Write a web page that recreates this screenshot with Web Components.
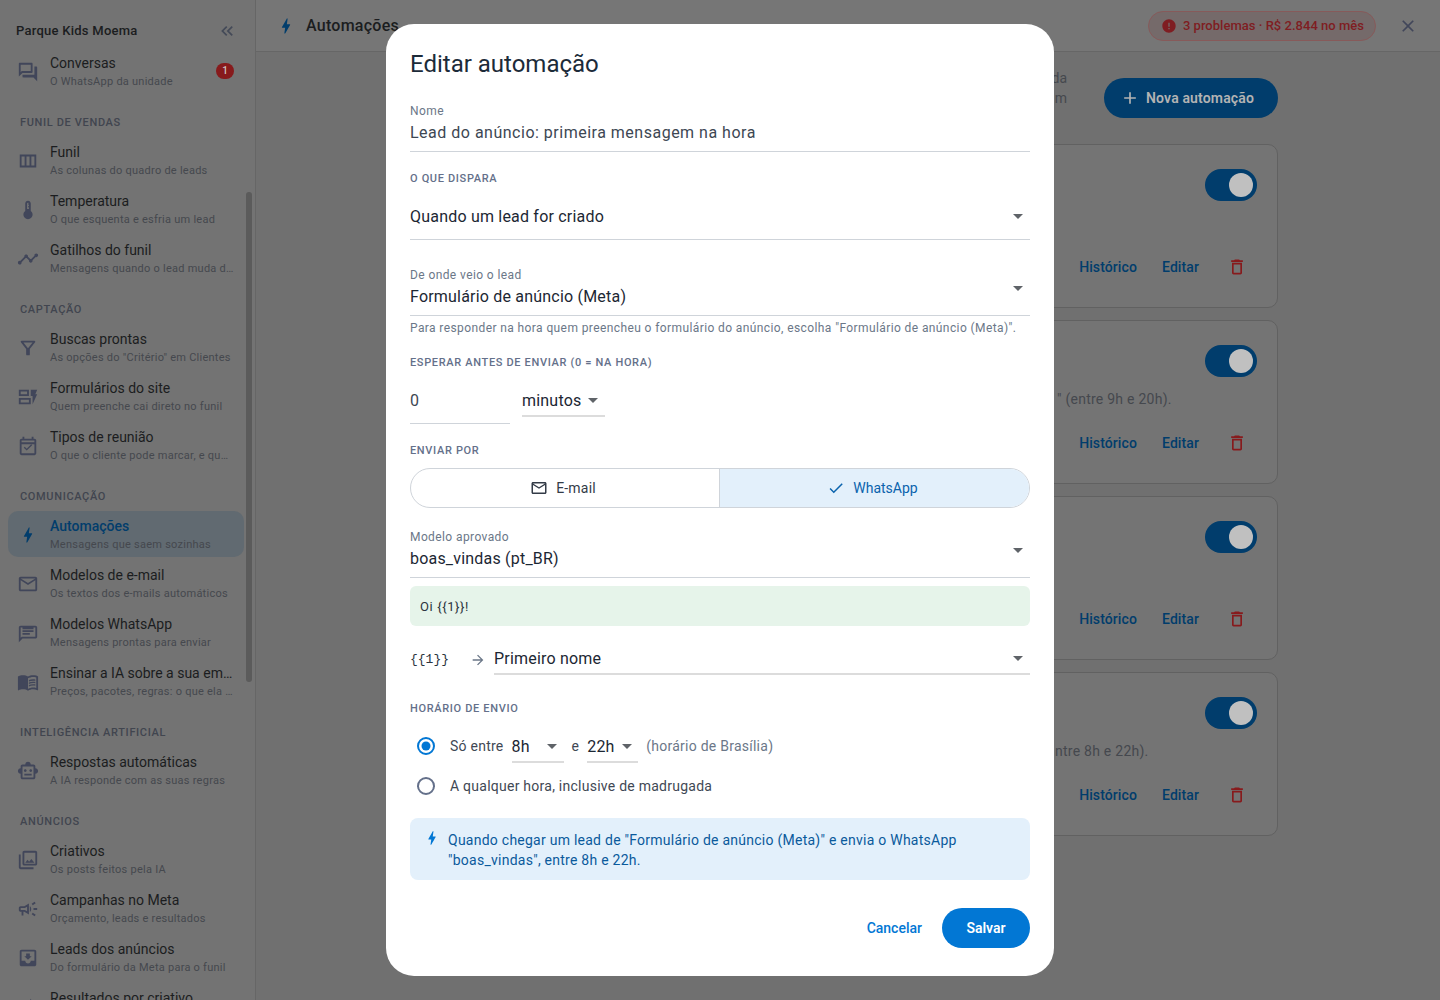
<!DOCTYPE html>
<html lang="pt-BR">
<head>
<meta charset="utf-8">
<title>Automações</title>
<style>
  html, body { margin: 0; height: 1000px; overflow: hidden; background: #707070; }
  body { font-family: Roboto, "Liberation Sans", sans-serif; }
</style>
</head>
<body>
<app-shell>
  <side-bar slot="side" unit="Parque Kids Moema">
    <nav-item icon="forum" name="Conversas" sub="O WhatsApp da unidade" badge="1"></nav-item>
    <nav-section label="FUNIL DE VENDAS"></nav-section>
    <nav-item icon="week" name="Funil" sub="As colunas do quadro de leads"></nav-item>
    <nav-item icon="thermo" name="Temperatura" sub="O que esquenta e esfria um lead"></nav-item>
    <nav-item icon="timeline" name="Gatilhos do funil" sub="Mensagens quando o lead muda d…"></nav-item>
    <nav-section label="CAPTAÇÃO"></nav-section>
    <nav-item icon="filter" name="Buscas prontas" sub='As opções do "Critério" em Clientes'></nav-item>
    <nav-item icon="dynform" name="Formulários do site" sub="Quem preenche cai direto no funil"></nav-item>
    <nav-item icon="event" name="Tipos de reunião" sub="O que o cliente pode marcar, e qu…"></nav-item>
    <nav-section label="COMUNICAÇÃO"></nav-section>
    <nav-item icon="bolt" name="Automações" sub="Mensagens que saem sozinhas" active></nav-item>
    <nav-item icon="mail" name="Modelos de e-mail" sub="Os textos dos e-mails automáticos"></nav-item>
    <nav-item icon="chat" name="Modelos WhatsApp" sub="Mensagens prontas para enviar"></nav-item>
    <nav-item icon="book" name="Ensinar a IA sobre a sua em…" sub="Preços, pacotes, regras: o que ela …"></nav-item>
    <nav-section label="INTELIGÊNCIA ARTIFICIAL"></nav-section>
    <nav-item icon="robot" name="Respostas automáticas" sub="A IA responde com as suas regras"></nav-item>
    <nav-section label="ANÚNCIOS"></nav-section>
    <nav-item icon="photos" name="Criativos" sub="Os posts feitos pela IA"></nav-item>
    <nav-item icon="campaign" name="Campanhas no Meta" sub="Orçamento, leads e resultados"></nav-item>
    <nav-item icon="inbox" name="Leads dos anúncios" sub="Do formulário da Meta para o funil"></nav-item>
    <nav-item icon="insights" name="Resultados por criativo" sub=""></nav-item>
  </side-bar>
  <top-bar slot="top" heading="Automações" alert="3 problemas · R$ 2.844 no mês"></top-bar>
  <auto-list slot="main">
    <auto-card></auto-card>
    <auto-card note='" (entre 9h e 20h).' left="638"></auto-card>
    <auto-card></auto-card>
    <auto-card note="ntre 8h e 22h)." left="636"></auto-card>
  </auto-list>
</app-shell>
<edit-dialog></edit-dialog>

<script>
const ICONS = {
  forum: "M15 4v7H5.17L4 12.17V4h11m1-2H3c-.55 0-1 .45-1 1v14l4-4h10c.55 0 1-.45 1-1V3c0-.55-.45-1-1-1zm5 4h-2v9H6v2c0 .55.45 1 1 1h11l4 4V7c0-.55-.45-1-1-1z",
  week: "M3 5v14h18V5H3zm5.33 12H5V7h3.33v10zm5.34 0h-3.33V7h3.33v10zM19 17h-3.33V7H19v10z",
  thermo: "M15 13V5c0-1.66-1.34-3-3-3S9 3.34 9 5v8c-1.21.91-2 2.37-2 4 0 2.76 2.24 5 5 5s5-2.24 5-5c0-1.63-.79-3.09-2-4zm-4-8c0-.55.45-1 1-1s1 .45 1 1h-1v1h1v2h-1v1h1v2h-2V5z",
  timeline: "M23 8c0 1.1-.9 2-2 2-.18 0-.35-.02-.51-.07l-3.56 3.55c.05.16.07.34.07.52 0 1.1-.9 2-2 2s-2-.9-2-2c0-.18.02-.36.07-.52l-2.55-2.55c-.16.05-.34.07-.52.07s-.36-.02-.52-.07l-4.55 4.56c.05.16.07.33.07.51 0 1.1-.9 2-2 2s-2-.9-2-2 .9-2 2-2c.18 0 .35.02.51.07l4.56-4.55C8.02 9.36 8 9.18 8 9c0-1.1.9-2 2-2s2 .9 2 2c0 .18-.02.36-.07.52l2.55 2.55c.16-.05.34-.07.52-.07s.36.02.52.07l3.55-3.56C19.02 8.35 19 8.18 19 8c0-1.1.9-2 2-2s2 .9 2 2z",
  insights: "M21 8c-1.45 0-2.26 1.44-1.93 2.51l-3.55 3.56c-.3-.09-.74-.09-1.04 0l-2.55-2.55C12.27 10.45 11.46 9 10 9c-1.45 0-2.27 1.44-1.93 2.52l-4.56 4.55C2.44 15.74 1 16.55 1 18c0 1.1.9 2 2 2 1.45 0 2.26-1.44 1.93-2.51l4.55-4.56c.3.09.74.09 1.04 0l2.55 2.55C12.73 16.55 13.54 18 15 18c1.45 0 2.27-1.44 1.93-2.52l3.56-3.55c1.07.33 2.51-.48 2.51-1.93 0-1.1-.9-2-2-2zM15 9l.94-2.07L18 6l-2.06-.93L15 3l-.92 2.07L12 6l2.08.93zM3.5 11 4 9l2-.5L4 8l-.5-2L3 8l-2 .5L3 9z",
  filter: "M7 6h10l-5.01 6.3L7 6zm-2.75-.39C6.27 8.2 10 13 10 13v6c0 .55.45 1 1 1h2c.55 0 1-.45 1-1v-6s3.72-4.8 5.74-7.39c.51-.66.04-1.61-.79-1.61H5.04c-.83 0-1.3.95-.79 1.61z",
  dynform: "M17 20v-9h-2V4h7l-2 5h2l-5 11zM15 13v7H2v-7h13zm-2 2H4v3h9v-3zM13 4v7H2V4h11zm-2 2H4v3h7V6z",
  event: "M19 4h-1V2h-2v2H8V2H6v2H5c-1.11 0-1.99.9-1.99 2L3 20c0 1.1.89 2 2 2h14c1.1 0 2-.9 2-2V6c0-1.1-.9-2-2-2zm0 16H5V10h14v10zm0-12H5V6h14v2zm-2.47 3.06L15.47 10l-4.88 4.88-2.12-2.12-1.06 1.06L10.59 17l5.94-5.94z",
  bolt: "M11 21h-1l1-7H7.5c-.58 0-.57-.32-.38-.66.19-.34.05-.08.07-.12C8.48 10.94 10.42 7.54 13 3h1l-1 7h3.5c.49 0 .56.33.47.51l-.07.15C12.96 17.55 11 21 11 21z",
  mail: "M22 6c0-1.1-.9-2-2-2H4c-1.1 0-2 .9-2 2v12c0 1.1.9 2 2 2h16c1.1 0 2-.9 2-2V6zm-2 0l-8 5-8-5h16zm0 12H4V8l8 5 8-5v10z",
  chat: "M20 4H4c-1.1 0-1.99.9-1.99 2L2 22l4-4h14c1.1 0 2-.9 2-2V6c0-1.1-.9-2-2-2zm0 12H5.17L4 17.17V6h16v10zM6 12h8v2H6zm0-3h12v2H6zm0-3h12v2H6z",
  book: "M21 5c-1.11-.35-2.33-.5-3.5-.5-1.95 0-4.05.4-5.5 1.5-1.45-1.1-3.55-1.5-5.5-1.5S2.45 4.9 1 6v14.65c0 .25.25.5.5.5.1 0 .15-.05.25-.05C3.1 20.45 5.05 20 6.5 20c1.95 0 4.05.4 5.5 1.5 1.35-.85 3.8-1.5 5.5-1.5 1.65 0 3.35.3 4.75 1.05.1.05.15.05.25.05.25 0 .5-.25.5-.5V6c-.6-.45-1.25-.75-2-1zm0 13.5c-1.1-.35-2.3-.5-3.5-.5-1.7 0-4.15.65-5.5 1.5V8c1.35-.85 3.8-1.5 5.5-1.5 1.2 0 2.4.15 3.5.5v11.5zM17.5 10.5c.88 0 1.73.09 2.5.26V9.24c-.79-.15-1.64-.24-2.5-.24-1.7 0-3.24.29-4.5.83v1.66c1.13-.64 2.7-.99 4.5-.99zM13 12.49v1.66c1.13-.64 2.7-.99 4.5-.99.88 0 1.73.09 2.5.26V11.9c-.79-.15-1.64-.24-2.5-.24-1.7 0-3.24.3-4.5.83zM17.5 14.33c-1.7 0-3.24.29-4.5.83v1.66c1.13-.64 2.7-.99 4.5-.99.88 0 1.73.09 2.5.26v-1.52c-.79-.16-1.64-.24-2.5-.24z",
  robot: "M20 9V7c0-1.1-.9-2-2-2h-3c0-1.66-1.34-3-3-3S9 3.34 9 5H6c-1.1 0-2 .9-2 2v2c-1.66 0-3 1.34-3 3s1.34 3 3 3v4c0 1.1.9 2 2 2h12c1.1 0 2-.9 2-2v-4c1.66 0 3-1.34 3-3s-1.34-3-3-3zm-2 10H6V7h12v12zm-9-6c-.83 0-1.5-.67-1.5-1.5S8.17 10 9 10s1.5.67 1.5 1.5S9.83 13 9 13zm7.5-1.5c0 .83-.67 1.5-1.5 1.5s-1.5-.67-1.5-1.5.67-1.5 1.5-1.5 1.5.67 1.5 1.5zM8 15h8v2H8v-2z",
  photos: "M20 4v12H8V4h12m0-2H8c-1.1 0-2 .9-2 2v12c0 1.1.9 2 2 2h12c1.1 0 2-.9 2-2V4c0-1.1-.9-2-2-2zm-8.5 9.67l1.69 2.26 2.48-3.1L19 15H9zM2 6v14c0 1.1.9 2 2 2h14v-2H4V6H2z",
  campaign: "M18 11v2h4v-2h-4zm-2 6.61c.96.71 2.21 1.65 3.2 2.39.4-.53.8-1.07 1.2-1.6-.99-.74-2.24-1.68-3.2-2.4-.4.54-.8 1.08-1.2 1.61zM20.4 5.6c-.4-.53-.8-1.07-1.2-1.6-.99.74-2.24 1.68-3.2 2.4.4.53.8 1.07 1.2 1.6.96-.72 2.21-1.65 3.2-2.4zM4 9c-1.1 0-2 .9-2 2v2c0 1.1.9 2 2 2h1v4h2v-4h1l5 3V6L8 9H4zm5.03 1.71L11 9.53v4.94l-1.97-1.18-.48-.29H4v-2h4.55l.48-.29zM15.5 12c0-1.33-.58-2.53-1.5-3.35v6.69c.92-.81 1.5-2.01 1.5-3.34z",
  inbox: "M19 3H4.99c-1.11 0-1.98.9-1.98 2L3 19c0 1.1.88 2 1.99 2H19c1.1 0 2-.9 2-2V5c0-1.1-.9-2-2-2zm0 12h-4c0 1.66-1.35 3-3 3s-3-1.34-3-3H4.99V5H19v10zm-3-5h-2V7h-4v3H8l4 4 4-4z",
  collapse: "M17.59 18 19 16.59 14.42 12 19 7.41 17.59 6l-6 6zM11 18l1.41-1.41L7.83 12l4.58-4.59L11 6l-6 6z",
  error: "M12 2C6.48 2 2 6.48 2 12s4.48 10 10 10 10-4.48 10-10S17.52 2 12 2zm1 15h-2v-2h2v2zm0-4h-2V7h2v6z",
  close: "M19 6.41 17.59 5 12 10.59 6.41 5 5 6.41 10.59 12 5 17.59 6.41 19 12 13.41 17.59 19 19 17.59 13.41 12z",
  add: "M19 13h-6v6h-2v-6H5v-2h6V5h2v6h6v2z",
  trash: "M16 9v10H8V9h8m-1.5-6h-5l-1 1H5v2h14V4h-3.5l-1-1zM18 7H6v12c0 1.1.9 2 2 2h8c1.1 0 2-.9 2-2V7z",
  check: "M9 16.17 4.83 12l-1.42 1.41L9 19 21 7l-1.41-1.41z",
  arrow: "M12 4l-1.41 1.41L16.17 11H4v2h12.17l-5.58 5.59L12 20l8-8z"
};

class MIcon extends HTMLElement {
  constructor() {
    super();
    this.attachShadow({ mode: "open" });
  }
  connectedCallback() {
    const size = this.getAttribute("size") || 20;
    this.shadowRoot.innerHTML = `
      <style>
        :host { display: inline-flex; flex: none; width: ${size}px; height: ${size}px; }
        svg { width: 100%; height: 100%; fill: currentColor; display: block; }
      </style>
      <svg viewBox="0 0 24 24"><path d="${ICONS[this.getAttribute("name")]}"></path></svg>`;
  }
}
customElements.define("m-icon", MIcon);

class AppShell extends HTMLElement {
  constructor() {
    super();
    this.attachShadow({ mode: "open" });
    this.shadowRoot.innerHTML = `
      <style>
        :host { display: flex; width: 1440px; height: 1000px; overflow: hidden; }
        .main { flex: 1; display: flex; flex-direction: column; min-width: 0; }
      </style>
      <slot name="side"></slot>
      <div class="main">
        <slot name="top"></slot>
        <slot name="main"></slot>
      </div>`;
  }
}
customElements.define("app-shell", AppShell);

class SideBar extends HTMLElement {
  constructor() {
    super();
    this.attachShadow({ mode: "open" });
  }
  connectedCallback() {
    this.shadowRoot.innerHTML = `
      <style>
        :host { display: block; position: relative; width: 255px; height: 1000px; flex: none; overflow: hidden;
          background: #737373; border-right: 1px solid #666; }
        header { display: flex; align-items: center; justify-content: space-between; height: 20px; padding: 21px 18px 8px 16px; }
        h1 { margin: 0; font-size: 13px; line-height: 20px; font-weight: 500; color: #1b1d20; letter-spacing: .25px; }
        header m-icon { color: #444a58; }
        .items { display: flex; flex-direction: column; gap: 3px; padding: 0 11px 0 8px; }
        .thumb { position: absolute; left: 246px; top: 192px; width: 6px; height: 490px; border-radius: 3px; background: #5b5b5b; }
      </style>
      <header><h1>${this.getAttribute("unit")}</h1><m-icon name="collapse" size="20"></m-icon></header>
      <div class="items"><slot></slot></div>
      <div class="thumb"></div>`;
  }
}
customElements.define("side-bar", SideBar);

class NavSection extends HTMLElement {
  constructor() {
    super();
    this.attachShadow({ mode: "open" });
  }
  connectedCallback() {
    this.shadowRoot.innerHTML = `
      <style>
        :host { display: block; height: 14px; padding: 18px 12px 5px; }
        div { font-size: 11px; line-height: 14px; font-weight: 500; letter-spacing: .65px; color: #41454f; }
      </style>
      <div>${this.getAttribute("label")}</div>`;
  }
}
customElements.define("nav-section", NavSection);

class NavItem extends HTMLElement {
  constructor() {
    super();
    this.attachShadow({ mode: "open" });
  }
  connectedCallback() {
    const active = this.hasAttribute("active");
    const badge = this.getAttribute("badge");
    this.shadowRoot.innerHTML = `
      <style>
        :host { display: flex; align-items: center; box-sizing: border-box; height: 46px; padding: ${active ? 2 : 0}px 10px 0 9px; border-radius: 10px;
          margin: ${active ? "-1px 0 1px" : "0"}; background: ${active ? "#616a71" : "transparent"}; }
        m-icon { color: ${active ? "#013d6c" : "#41465a"}; margin: 0 ${active ? 12 : 11}px 0 ${active ? 1 : 0}px; }
        .text { flex: 1; min-width: 0; white-space: nowrap; }
        .name { font-size: 14px; line-height: 18px; margin-bottom: 2px; color: ${active ? "#013d6c" : "#1b1d20"}; font-weight: ${active ? 500 : 400}; }
        .sub { font-size: 11px; line-height: 16px; min-height: 16px; letter-spacing: .25px; color: #45484e; }
        .badge { width: 18px; height: 16px; border-radius: 8px; margin: -2px 0 0 8px; background: #871a1c; color: #cfc4c4;
          font-size: 10px; line-height: 16px; font-weight: 500; text-align: center; }
      </style>
      <m-icon name="${this.getAttribute("icon")}" size="${active ? 20 : 22}"></m-icon>
      <div class="text">
        <div class="name">${this.getAttribute("name")}</div>
        <div class="sub">${this.getAttribute("sub")}</div>
      </div>
      ${badge ? `<div class="badge">${badge}</div>` : ""}`;
  }
}
customElements.define("nav-item", NavItem);

class TopBar extends HTMLElement {
  constructor() {
    super();
    this.attachShadow({ mode: "open" });
  }
  connectedCallback() {
    this.shadowRoot.innerHTML = `
      <style>
        :host { display: flex; align-items: center; height: 51px; flex: none; padding: 0 22px 0 20px;
          background: #767676; border-bottom: 1px solid #666; }
        .bolt { color: #013d6c; margin-right: 10px; }
        h2 { flex: 1; margin: 0; font-size: 16px; line-height: 24px; font-weight: 500; letter-spacing: .25px; color: #1b1d20; }
        .pill { display: flex; align-items: center; gap: 6px; height: 28px; padding: 0 11px 0 12px; border-radius: 15px;
          border: 1px solid #875a5a; background: #756a6a; color: #7f1d22; font-size: 13px; font-weight: 500; letter-spacing: .02px; }
        .close { color: #41465a; margin-left: 22px; }
      </style>
      <m-icon class="bolt" name="bolt" size="20"></m-icon>
      <h2>${this.getAttribute("heading")}</h2>
      <div class="pill"><m-icon name="error" size="16"></m-icon><span>${this.getAttribute("alert")}</span></div>
      <m-icon class="close" name="close" size="20"></m-icon>`;
  }
}
customElements.define("top-bar", TopBar);

class AutoList extends HTMLElement {
  constructor() {
    super();
    this.attachShadow({ mode: "open" });
    this.shadowRoot.innerHTML = `
      <style>
        :host { display: block; width: 860px; margin-left: 162px; padding-top: 26px; }
        .head { display: flex; justify-content: space-between; height: 40px; margin-bottom: 26px; }
        .intro { box-sizing: border-box; width: 27px; margin: -10px 0 0 622px; text-align: right; font-size: 14px; line-height: 20px; color: #45484e; }
        .new { display: flex; align-items: center; gap: 6px; height: 40px; padding: 0 24px 0 16px; border-radius: 20px;
          background: #013d6c; color: #b3b3b3; font-size: 14px; font-weight: 600; letter-spacing: .15px; }
        .cards { display: flex; flex-direction: column; gap: 12px; }
      </style>
      <div class="head">
        <div class="intro">da<br>m</div>
        <div class="new"><m-icon name="add" size="20"></m-icon><span>Nova automação</span></div>
      </div>
      <div class="cards"><slot></slot></div>`;
  }
}
customElements.define("auto-list", AutoList);

class AutoCard extends HTMLElement {
  constructor() {
    super();
    this.attachShadow({ mode: "open" });
  }
  connectedCallback() {
    const note = this.getAttribute("note") || "";
    const left = this.getAttribute("left") || 0;
    this.shadowRoot.innerHTML = `
      <style>
        :host { display: flex; flex-direction: column; box-sizing: border-box; height: 164px; padding: 24px 20px 0 0;
          background: #747474; border: 1px solid #616161; border-radius: 10px; }
        .switch { align-self: flex-end; box-sizing: border-box; width: 52px; height: 32px; border-radius: 16px; background: #013d6c; padding: 4px 4px 4px 24px; }
        .switch i { display: block; width: 24px; height: 24px; border-radius: 50%; background: #c0c0c0; }
        .note { height: 44px; margin: 12px 0 0 ${left}px; font-size: 14px; line-height: 20px; letter-spacing: .25px; color: #45484e; white-space: nowrap; }
        .actions { display: flex; align-items: center; justify-content: flex-end; font-size: 14px; font-weight: 500; letter-spacing: .1px; color: #013d6c; height: 20px; margin-right: 1px; }
        .actions span + span { margin-left: 25px; }
        m-icon { color: #871a1c; margin: 0 9px 0 28px; }
      </style>
      <div class="switch"><i></i></div>
      <div class="note">${note}</div>
      <div class="actions"><span>Histórico</span><span>Editar</span><m-icon name="trash" size="20"></m-icon></div>`;
  }
}
customElements.define("auto-card", AutoCard);

class SectionLabel extends HTMLElement {
  constructor() {
    super();
    this.attachShadow({ mode: "open" });
    this.shadowRoot.innerHTML = `
      <style>
        :host { display: block; font-size: 11px; line-height: 14px; font-weight: 500; letter-spacing: .66px; color: #64708a; }
      </style>
      <slot></slot>`;
  }
}
customElements.define("section-label", SectionLabel);

class LineField extends HTMLElement {
  constructor() {
    super();
    this.attachShadow({ mode: "open" });
  }
  connectedCallback() {
    const label = this.getAttribute("label");
    const select = this.hasAttribute("select");
    const thick = this.hasAttribute("thick");
    const input = this.hasAttribute("ls");
    this.shadowRoot.innerHTML = `
      <style>
        :host { display: block; box-sizing: border-box; border-bottom: ${thick ? 2 : 1}px solid ${thick ? "#dcdcdc" : "#cfd4da"};
          padding-bottom: ${this.getAttribute("pb") || 6}px; position: relative; }
        .label { font-size: 12px; line-height: 16px; letter-spacing: .4px; color: #6b7788; margin-bottom: 2px; }
        .row { display: flex; align-items: center; }
        .value { flex: 1; font-size: 16px; line-height: 24px; color: ${input ? "#3d4753" : "#1c2733"}; letter-spacing: ${this.getAttribute("ls") || .2}px; white-space: nowrap; }
        svg { flex: none; width: 24px; height: 24px; fill: #5f6368; }
      </style>
      ${label ? `<div class="label">${label}</div>` : ""}
      <div class="row">
        <div class="value">${this.getAttribute("value")}</div>
        ${select ? `<svg viewBox="0 0 24 24" style="${label ? "position:absolute;right:0;top:9px" : "margin-top:-2px"}"><path d="M7 10l5 5 5-5z"></path></svg>` : ""}
      </div>`;
  }
}
customElements.define("line-field", LineField);

class EditDialog extends HTMLElement {
  constructor() {
    super();
    this.attachShadow({ mode: "open" });
    this.shadowRoot.innerHTML = `
      <style>
        :host { position: fixed; left: 386px; top: 24px; width: 668px; height: 952px; box-sizing: border-box;
          padding: 24px 24px 0; background: #fff; border-radius: 28px; color: #1c2733; }
        h2 { margin: 0 0 23px; font-size: 24px; line-height: 32px; font-weight: 400; color: #1c2b39; }
        .send { display: flex; height: 40px; margin-top: 10px; border: 1px solid #cfd4da; border-radius: 20px; overflow: hidden; box-sizing: border-box; font-size: 14px; }
        .send div { display: flex; align-items: center; justify-content: center; gap: 8px; padding-right: 4px; color: #333b47; }
        .send .off { flex: none; width: 304px; letter-spacing: .2px; }
        .send .on { flex: 1; background: #e3f0fb; color: #0a63ad; border-left: 1px solid #cfd4da; }
        .wait { display: flex; align-items: flex-start; gap: 12px; margin-top: 8px; }
        .tpl { box-sizing: border-box; height: 40px; margin-top: 8px; padding: 0 10px; display: flex; align-items: center; border-radius: 6px;
          background: #e6f4ea; font-size: 13px; letter-spacing: .6px; color: #2b3540; }
        .map { display: flex; align-items: flex-start; margin-top: 9px; height: 40px; }
        .map code { font-family: "Liberation Mono", monospace; font-size: 13px; line-height: 24px; width: 60px; margin-top: 13px; color: #2b3540; }
        .map m-icon { color: #6b7788; margin: 17px 8px 0 0; }
        .map line-field { flex: 1; margin-top: 12px; }
        .radio { display: flex; align-items: center; height: 40px; font-size: 14px; letter-spacing: .25px; color: #3f4854; padding-left: 7px; }
        .radio svg { width: 18px; height: 18px; margin-right: 15px; flex: none; }
        .radio line-field { margin: 0 8px; padding-top: 6px; }
        .muted { color: #6b7788; margin-left: 0; }
        .info { display: flex; gap: 7px; box-sizing: border-box; height: 62px; margin-top: 12px; padding: 12px 16px; border-radius: 8px; background: #e3f0fb; color: #0a5a9c;
          font-size: 14px; line-height: 20px; letter-spacing: .25px; }
        .info m-icon { color: #0277d4; margin-top: -1px; margin-left: -3px; }
        .foot { display: flex; justify-content: flex-end; align-items: center; gap: 20px; margin-top: 28px; font-size: 14px; font-weight: 500; }
        .cancel { color: #0277d4; }
        .save { height: 40px; width: 88px; border-radius: 20px; background: #0277d4; color: #fff; font-weight: 600; display: flex; align-items: center; justify-content: center; }
      </style>
      <h2>Editar automação</h2>
      <line-field label="Nome" value="Lead do anúncio: primeira mensagem na hora" ls=".5"></line-field>
      <section-label style="margin-top:20px">O QUE DISPARA</section-label>
      <line-field select value="Quando um lead for criado" style="margin-top:8px;padding:11px 0 10px"></line-field>
      <line-field select label="De onde veio o lead" value="Formulário de anúncio (Meta)" style="margin-top:27px"></line-field>
      <div style="font-size:12px;line-height:16px;letter-spacing:.4px;color:#6b7788;margin-top:4px">Para responder na hora quem preencheu o formulário do anúncio, escolha "Formulário de anúncio (Meta)".</div>
      <section-label style="margin-top:20px">ESPERAR ANTES DE ENVIAR (0 = NA HORA)</section-label>
      <div class="wait">
        <line-field value="0" pb="10" ls=".5" style="width:100px;padding-top:11px"></line-field>
        <line-field select thick value="minutos" pb="2" style="width:83px;padding-top:11px"></line-field>
      </div>
      <section-label style="margin-top:20px">ENVIAR POR</section-label>
      <div class="send">
        <div class="off"><m-icon name="mail" size="18"></m-icon><span>E-mail</span></div>
        <div class="on"><m-icon name="check" size="18"></m-icon><span>WhatsApp</span></div>
      </div>
      <line-field select label="Modelo aprovado" value="boas_vindas (pt_BR)" style="margin-top:21px"></line-field>
      <div class="tpl">Oi {{1}}!</div>
      <div class="map">
        <code>{{1}}</code>
        <m-icon name="arrow" size="16"></m-icon>
        <line-field select thick value="Primeiro nome" pb="2"></line-field>
      </div>
      <section-label style="margin-top:27px">HORÁRIO DE ENVIO</section-label>
      <div class="radio" style="margin-top:10px">
        <svg viewBox="0 0 18 18"><circle cx="9" cy="9" r="8" fill="none" stroke="#0277d4" stroke-width="2"></circle><circle cx="9" cy="9" r="4.5" fill="#0277d4"></circle></svg>
        <span>Só entre</span>
        <line-field select thick value="8h" pb="2" style="width:52px"></line-field>
        <span>e</span>
        <line-field select thick value="22h" pb="2" style="width:51px"></line-field>
        <span class="muted">(horário de Brasília)</span>
      </div>
      <div class="radio">
        <svg viewBox="0 0 18 18"><circle cx="9" cy="9" r="8" fill="none" stroke="#64708a" stroke-width="2"></circle></svg>
        <span>A qualquer hora, inclusive de madrugada</span>
      </div>
      <div class="info">
        <m-icon name="bolt" size="18"></m-icon>
        <div>Quando chegar um lead de "Formulário de anúncio (Meta)" e envia o WhatsApp<br>"boas_vindas", entre 8h e 22h.</div>
      </div>
      <div class="foot"><span class="cancel">Cancelar</span><div class="save">Salvar</div></div>`;
  }
}
customElements.define("edit-dialog", EditDialog);
</script>
</body>
</html>
